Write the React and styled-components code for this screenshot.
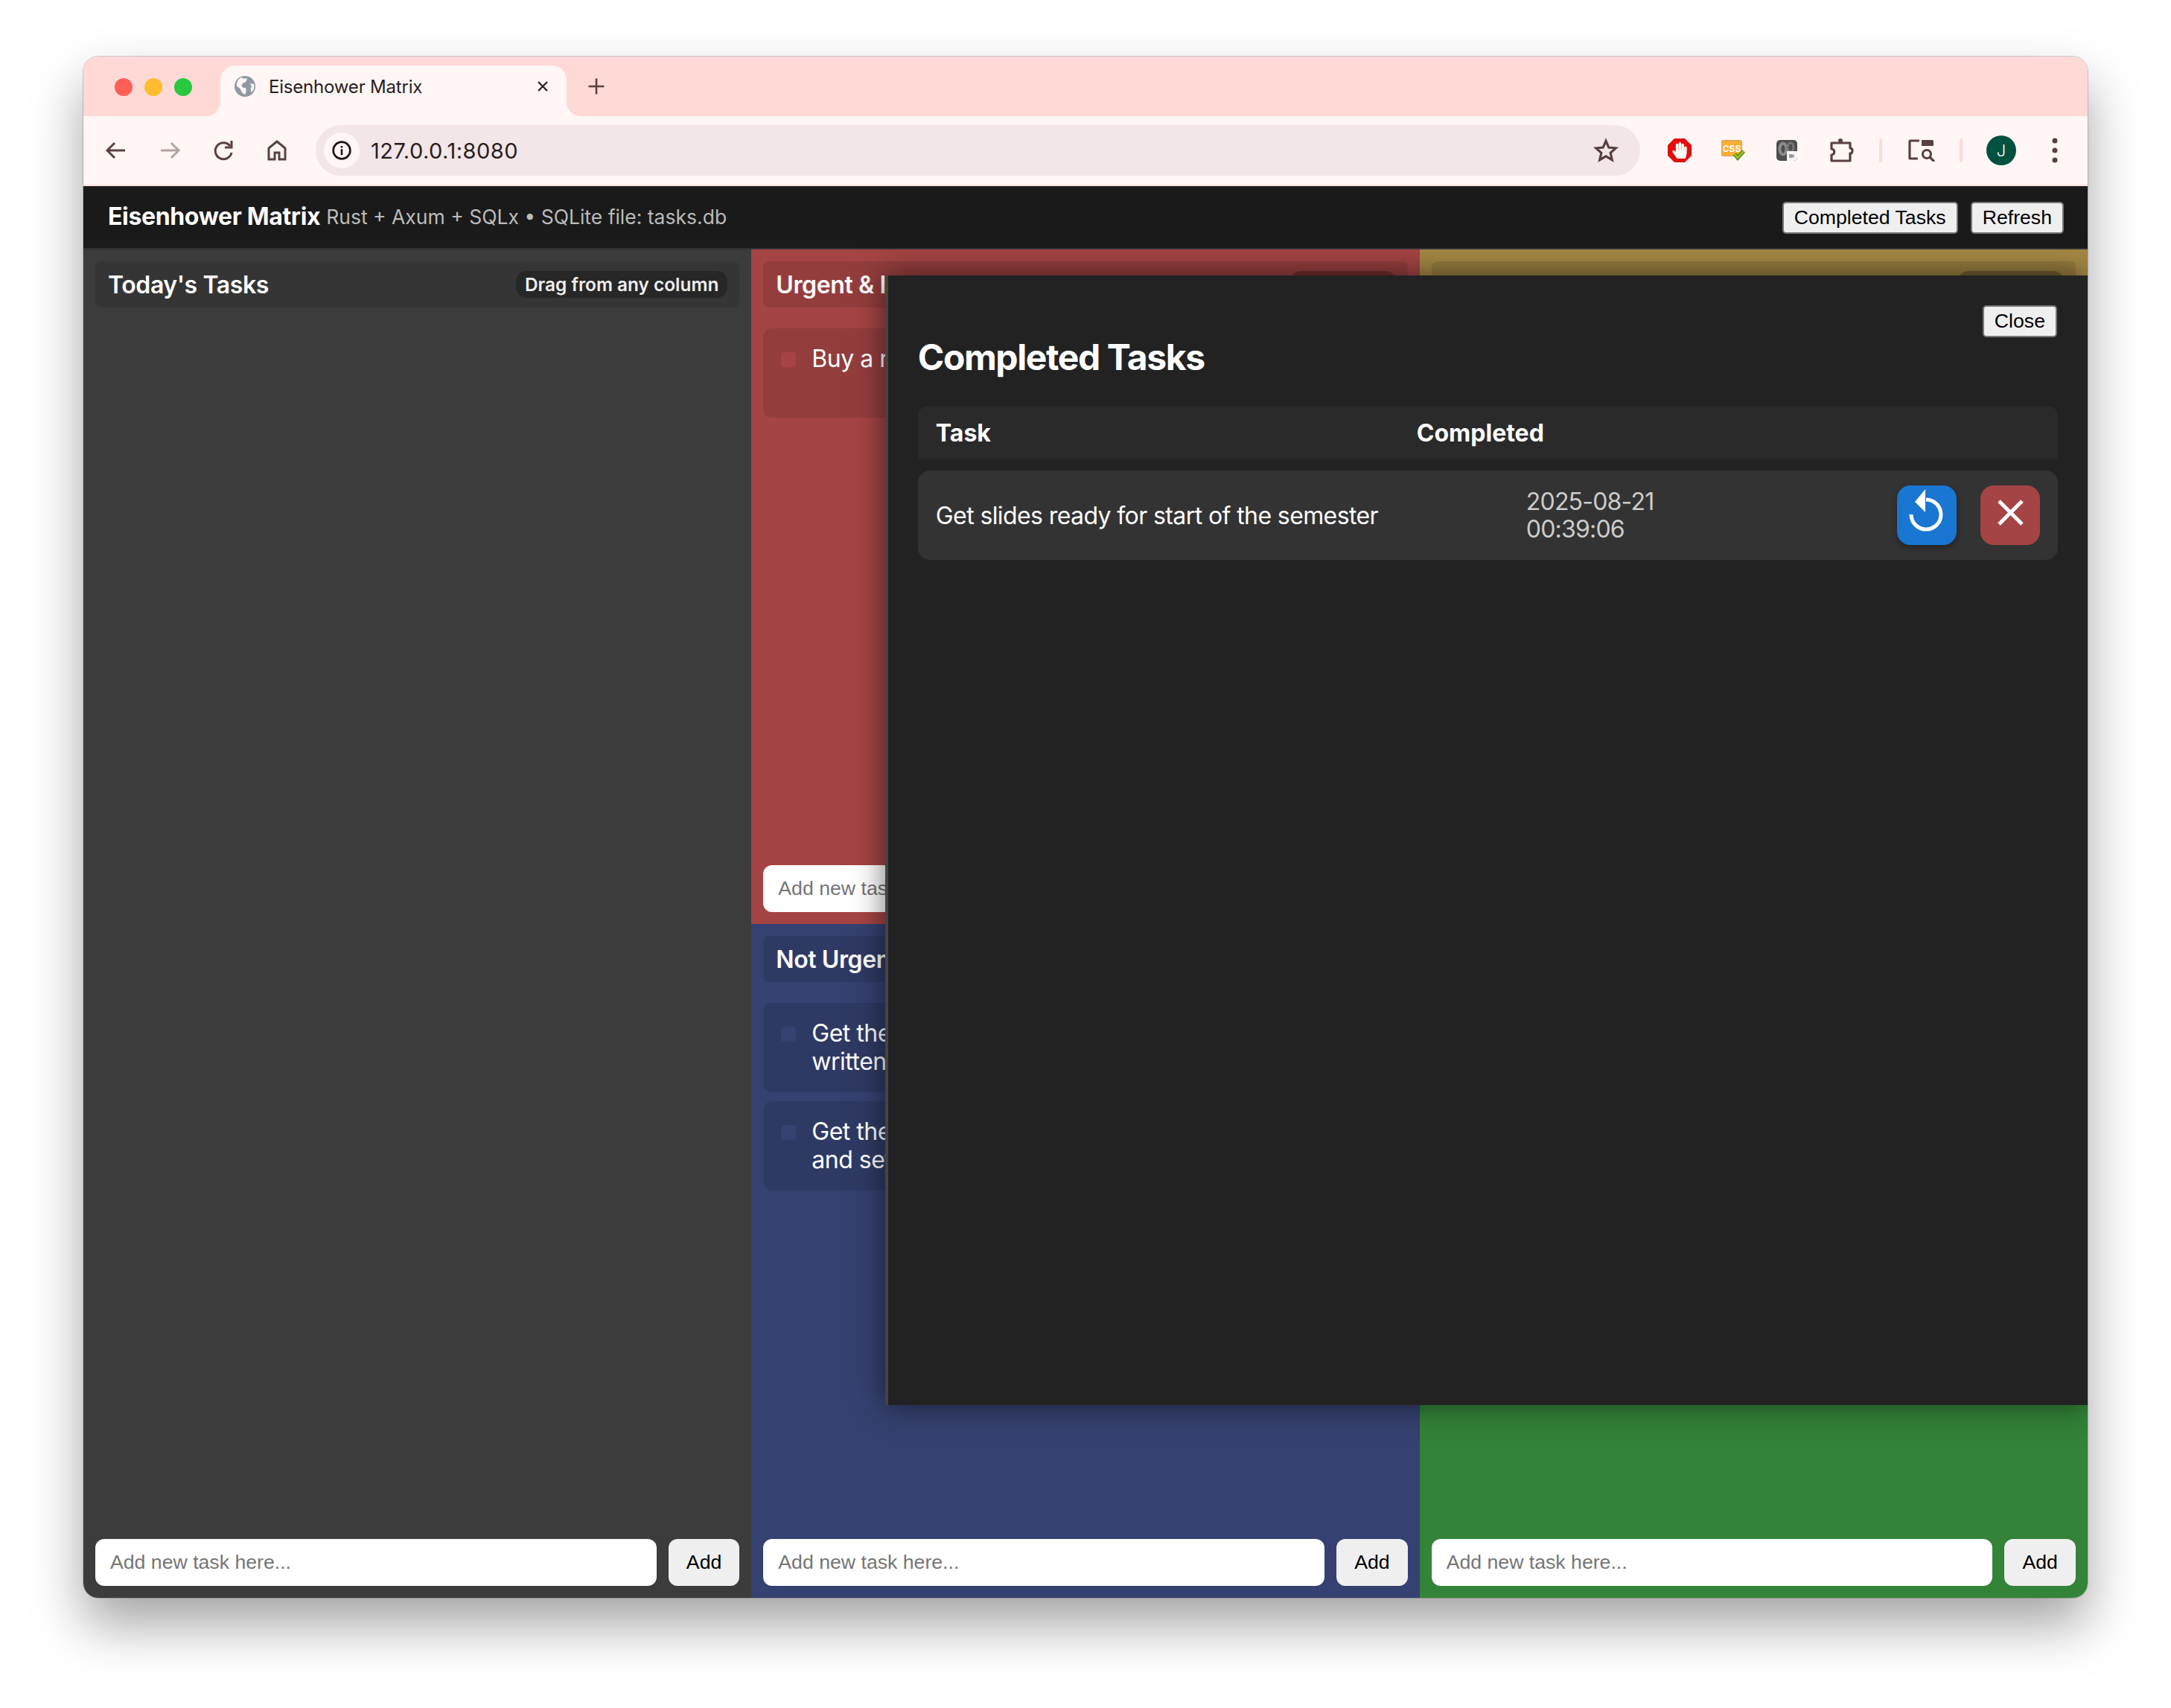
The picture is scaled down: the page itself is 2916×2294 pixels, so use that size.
import React from "react";
import styled, { createGlobalStyle } from "styled-components";
import { FaHandPaper } from "react-icons/fa";

const GlobalStyle = createGlobalStyle`
  * { box-sizing: border-box; }
  body {
    margin: 0;
    background: #fff;
    font-family: Inter, "Noto Sans", sans-serif;
  }
`;

const COLUMNS = [
  {
    title: "Today's Tasks",
    badge: "Drag from any column",
    color: "#3c3c3c",
    wide: true,
    tasks: [],
  },
  { title: "Urgent & Important", badge: "Do first", color: "#a54444", tasks: ["Buy a r"] },
  { title: "Urgent & Not Important", badge: "Schedule", color: "#a58844", tasks: [] },
  {
    title: "Not Urgent & Important",
    badge: "Delegate",
    color: "#354170",
    tasks: ["Get the\nwritten", "Get the\nand set"],
  },
  { title: "Not Urgent & Not Important", badge: "Delete", color: "#338338", tasks: [] },
];

const Page = styled.div`
  height: 2294px;
  padding: 76px 112px 148px;
`;

const Window = styled.div`
  height: 100%;
  display: flex;
  flex-direction: column;
  border-radius: 20px;
  overflow: hidden;
  box-shadow: 0 0 0 1px rgba(0, 0, 0, 0.18), 0 36px 70px rgba(0, 0, 0, 0.36);
`;

const TabStrip = styled.div`
  height: 80px;
  flex: none;
  display: flex;
  align-items: flex-end;
  background: #ffd9d6;
  padding-left: 42px;
`;

const Lights = styled.div`
  display: flex;
  gap: 16px;
  align-self: center;
  margin-top: 2px;
  margin-right: 38px;
`;

const Light = styled.span`
  width: 24px;
  height: 24px;
  border-radius: 50%;
  background: ${(p) => p.$color};
`;

const Tab = styled.div`
  position: relative;
  width: 465px;
  height: 68px;
  display: flex;
  align-items: center;
  padding: 0 20px 12px 19px;
  background: #fff6f5;
  border-radius: 20px 20px 0 0;
  color: #2b1d1d;
  font-size: 24px;

  &::before,
  &::after {
    content: "";
    position: absolute;
    bottom: 0;
    width: 20px;
    height: 20px;
  }
  &::before {
    left: -20px;
    background: radial-gradient(circle at 0 0, #ffd9d6 20px, #fff6f5 20.5px);
  }
  &::after {
    right: -20px;
    background: radial-gradient(circle at 100% 0, #ffd9d6 20px, #fff6f5 20.5px);
  }
`;

const TabTitle = styled.span`
  flex: 1;
  margin-left: 18px;
  letter-spacing: -0.2px;
`;

const NewTab = styled.div`
  width: 80px;
  height: 68px;
  display: flex;
  align-items: center;
  justify-content: center;
  padding-bottom: 12px;
`;

const Toolbar = styled.div`
  height: 94px;
  flex: none;
  display: flex;
  align-items: flex-start;
  padding: 12px 8px 0;
  background: #fff6f5;
  border-bottom: 2px solid #ffe3df;
`;

const Slot = styled.div`
  width: 72px;
  height: 68px;
  flex: none;
  display: flex;
  align-items: center;
  justify-content: center;
`;

const Omnibox = styled.div`
  flex: 1;
  height: 68px;
  margin: 0 17px 0 16px;
  display: flex;
  align-items: center;
  padding: 0 29px 0 11px;
  background: #f2e6e8;
  border-radius: 34px;
  color: #2b1d1d;
  font-size: 29px;
  letter-spacing: 0.5px;
`;

const InfoChip = styled.span`
  width: 48px;
  height: 48px;
  flex: none;
  display: flex;
  align-items: center;
  justify-content: center;
  border-radius: 50%;
  background: #fff6f5;
  margin-right: 15px;
`;

const Address = styled.span`
  flex: 1;
`;

const Divider = styled.div`
  width: 36px;
  height: 68px;
  flex: none;
  display: flex;
  align-items: center;
  justify-content: center;

  &::before {
    content: "";
    width: 4px;
    height: 32px;
    border-radius: 2px;
    background: #ffd9d6;
  }
`;

const Avatar = styled.span`
  width: 40px;
  height: 40px;
  display: flex;
  align-items: center;
  justify-content: center;
  border-radius: 50%;
  background: #00513f;
  color: #fff;
  font-size: 22px;
  font-weight: 300;
`;

const AppArea = styled.div`
  position: relative;
  flex: 1;
  min-height: 0;
  display: flex;
  flex-direction: column;
  overflow: hidden;
`;

const AppHeader = styled.header`
  height: 85px;
  flex: none;
  display: flex;
  align-items: center;
  gap: 17px;
  padding: 0 32px 2px 33px;
  background: #1a1a1a;
  border-bottom: 2px solid #333;
`;

const AppTitle = styled.h1`
  margin: 0;
  color: #fff;
  font-size: 32px;
  font-weight: 700;
  letter-spacing: -0.35px;
`;

const AppSub = styled.span`
  flex: 1;
  margin-left: -9px;
  color: #bbb;
  font-size: 26.5px;
`;

const PlainButton = styled.button`
  height: 43px;
  padding: 0 14px;
  font-family: "Liberation Sans", Arial, sans-serif;
  font-size: 26.67px;
  color: #000;
  background: #efefef;
  border: 2px solid #767676;
  border-radius: 5px;
`;

const HeaderButton = styled(PlainButton)`
  margin-top: 3px;
`;

const Matrix = styled.main`
  flex: 1;
  min-height: 0;
  display: grid;
  grid-template-columns: repeat(3, 1fr);
  grid-template-rows: 906px 1fr;
`;

const Column = styled.section`
  min-width: 0;
  min-height: 0;
  display: flex;
  flex-direction: column;
  padding: 16px;
  background: ${(p) => p.$color};
  grid-row: ${(p) => (p.$wide ? "span 2" : "auto")};
`;

const ColumnHeader = styled.div`
  height: 62px;
  flex: none;
  display: flex;
  align-items: center;
  justify-content: space-between;
  padding: 0 16px 0 17px;
  margin-bottom: 28px;
  border-radius: 8px;
  background: rgba(0, 0, 0, 0.1);
`;

const ColumnTitle = styled.h2`
  margin: 0;
  color: #fff;
  font-size: 32px;
  font-weight: 600;
  letter-spacing: -0.4px;
  white-space: nowrap;
`;

const Badge = styled.span`
  height: 36px;
  min-width: 142px;
  display: flex;
  align-items: center;
  padding: 0 12px;
  border-radius: 14px;
  background: rgba(0, 0, 0, 0.25);
  color: #eee;
  font-size: 24.4px;
  font-weight: 600;
  white-space: nowrap;
`;

const TaskList = styled.div`
  flex: 1;
  min-height: 0;
  display: flex;
  flex-direction: column;
  gap: 12px;
`;

const TaskCard = styled.div`
  height: 120px;
  flex: none;
  display: flex;
  align-items: flex-start;
  gap: 21px;
  padding: 22px 24px;
  border-radius: 12px;
  background: rgba(0, 0, 0, 0.1);
  color: #fff;
  font-size: 32px;
  line-height: 38px;
  letter-spacing: -0.5px;
  white-space: pre-line;
`;

const Check = styled.span`
  width: 20px;
  height: 20px;
  flex: none;
  margin-top: 10px;
  border-radius: 4px;
  background: ${(p) => p.$color};
`;

const AddForm = styled.form`
  height: 63px;
  flex: none;
  display: flex;
  gap: 16px;
`;

const AddInput = styled.input`
  flex: 1;
  min-width: 0;
  padding: 0 20px;
  border: none;
  border-radius: 12px;
  background: #fff;
  font-family: "Liberation Sans", Arial, sans-serif;
  font-size: 26.67px;

  &::placeholder {
    color: #757575;
  }
`;

const AddButton = styled.button`
  width: 95.5px;
  border: none;
  border-radius: 12px;
  background: #efefef;
  color: #000;
  font-family: "Liberation Sans", Arial, sans-serif;
  font-size: 26.67px;
`;

const Modal = styled.div`
  position: absolute;
  top: 120px;
  bottom: 259px;
  left: 40%;
  right: 0;
  padding: 40px;
  background: #222;
  border-left: 4px solid #444;
  box-shadow: 0 0 40px rgba(0, 0, 0, 0.55);
  color: #fff;
`;

const CloseButton = styled(PlainButton)`
  position: absolute;
  top: 40px;
  right: 41px;
`;

const ModalTitle = styled.h2`
  margin: 0;
  height: 136px;
  padding-top: 41px;
  font-size: 48px;
  line-height: 58px;
  font-weight: 700;
  letter-spacing: -1.4px;
`;

const TableHead = styled.div`
  height: 70px;
  display: grid;
  grid-template-columns: 646px 1fr;
  align-items: center;
  padding: 0 24px;
  margin-bottom: 16px;
  border-radius: 12px 12px 0 0;
  background: #2a2a2a;
  font-size: 32px;
  font-weight: 700;
`;

const TableRow = styled.div`
  height: 120px;
  display: grid;
  grid-template-columns: 793px 1fr auto;
  align-items: center;
  padding: 0 24px;
  border-radius: 16px;
  background: #333;
  font-size: 32px;
  letter-spacing: -0.6px;
`;

const DateCell = styled.div`
  color: #ccc;
  line-height: 37px;
  letter-spacing: -0.8px;
`;

const Actions = styled.div`
  display: flex;
  gap: 32px;
`;

const RoundButton = styled.button`
  width: 80px;
  height: 80px;
  padding: 0;
  display: flex;
  border: none;
  border-radius: 18px;
  background: ${(p) => p.$color};
  box-shadow: ${(p) => (p.$raised ? "0 3px 8px rgba(0, 0, 0, 0.35)" : "none")};
`;

const AdBlockWrap = styled.span`
  width: 32px;
  height: 32px;
  display: flex;
  align-items: center;
  justify-content: center;
  background: #e30d0d;
  color: #fff;
  font-size: 22px;
  clip-path: polygon(28% 0, 72% 0, 100% 28%, 100% 72%, 72% 100%, 28% 100%, 0 72%, 0 28%);
`;

const ICON = "#5a4040";

const Stroke = ({ size = 32, color = ICON, width = 3, children }) => (
  <svg width={size} height={size} viewBox="0 0 32 32" fill="none" stroke={color} strokeWidth={width}>
    {children}
  </svg>
);

const GlobeIcon = () => (
  <svg width="28" height="28" viewBox="0 0 28 28">
    <circle cx="14" cy="14" r="14" fill="#8f98a3" />
    <path
      d="M9 2c3 2 6 2 8 1-1 3-1 5-4 6-2 1-4 2-3 5 1 2 3 2 5 2 1 3 1 6-1 9-3-1-5-4-6-7-1-2-3-3-5-4C2 9 5 4 9 2ZM21 10l5 1c1 4 0 8-3 11-2-3-1-6 0-8l-2-4Z"
      fill="#fff6f5"
    />
  </svg>
);

const AdBlockIcon = () => (
  <AdBlockWrap>
    <FaHandPaper />
  </AdBlockWrap>
);

const CssIcon = () => (
  <svg width="32" height="28" viewBox="0 0 32 28">
    <rect x="0.5" y="0.5" width="27" height="21" rx="1.5" fill="#f9ae36" stroke="#d9a060" />
    <text x="14" y="15.5" textAnchor="middle" fontSize="12" fontWeight="700" fill="#fff" fontFamily="Inter, sans-serif">
      CSS
    </text>
    <path d="M18 19l4 5 8-9" fill="none" stroke="#4f7d12" strokeWidth="5" />
    <path d="M18 19l4 5 8-9" fill="none" stroke="#9ccb28" strokeWidth="2.5" />
  </svg>
);

const MeetIcon = () => (
  <svg width="28" height="28" viewBox="0 0 28 28">
    <rect width="28" height="28" rx="5" fill="#4e4e4e" />
    <ellipse cx="9" cy="12" rx="4.5" ry="7.5" fill="none" stroke="#8b8b8b" strokeWidth="4" />
    <ellipse cx="19" cy="10" rx="4" ry="6" fill="none" stroke="#777" strokeWidth="3" />
    <path d="M14 15h14v8a5 5 0 0 1-5 5h-9Z" fill="#f5f5f5" />
    <path d="M17 19h5v2l2-2v5l-2-2v2h-5Z" fill="#999" />
  </svg>
);

const PuzzleIcon = () => (
  <svg width="34" height="34" viewBox="0 0 34 34" fill="none" stroke={ICON} strokeWidth="3.2" strokeLinejoin="round" style={{ marginLeft: 4 }}>
    <path d="M3 7H28V14C32 13 32 22 28 21V31H3V23C8 23 8 15 3 15Z" />
    <circle cx="15" cy="4" r="3" fill={ICON} stroke="none" />
  </svg>
);

const MediaIcon = () => (
  <svg width="36" height="30" viewBox="0 0 36 30" fill="none" stroke={ICON} strokeWidth="3.2" style={{ marginLeft: 2 }}>
    <path d="M15 2H3a1 1 0 0 0-1 1V25a1 1 0 0 0 1 1H13" />
    <path d="M18 1h14a2 2 0 0 1 2 2v6H18Z" fill={ICON} stroke="none" />
    <circle cx="25" cy="20" r="5.5" />
    <path d="M29 24l6 6" />
  </svg>
);

const UndoIcon = () => (
  <svg width="80" height="80" viewBox="0 0 80 80">
    <path d="M39 19A20 20 0 1 1 19 39" fill="none" stroke="#fff" strokeWidth="5" />
    <path d="M38 5L24 22L38 36Z" fill="#fff" />
  </svg>
);

const CrossIcon = () => (
  <svg width="80" height="80" viewBox="0 0 80 80">
    <path d="M25 21L56 52M56 21L25 52" fill="none" stroke="#fff" strokeWidth="5" />
  </svg>
);

const BrowserChrome = () => (
  <>
    <TabStrip>
      <Lights>
        <Light $color="#ff5f57" />
        <Light $color="#febc2e" />
        <Light $color="#28c840" />
      </Lights>
      <Tab>
        <GlobeIcon />
        <TabTitle>Eisenhower Matrix</TabTitle>
        <Stroke size={24} color="#2b1d1d">
          <path d="M8 8l16 16M24 8L8 24" />
        </Stroke>
      </Tab>
      <NewTab>
        <Stroke size={28} color={ICON}>
          <path d="M16 4v24M4 16h24" />
        </Stroke>
      </NewTab>
    </TabStrip>
    <Toolbar>
      <Slot>
        <Stroke>
          <path d="M28 16H5M14 6L4 16l10 10" />
        </Stroke>
      </Slot>
      <Slot>
        <Stroke color="#b3a3a3">
          <path d="M4 16h23M18 6l10 10-10 10" />
        </Stroke>
      </Slot>
      <Slot>
        <Stroke>
          <path d="M25 10a11 11 0 1 0 2 9" />
          <path d="M27 3v9h-9" />
        </Stroke>
      </Slot>
      <Slot>
        <Stroke>
          <path d="M16 4L5 13v15h8v-9h6v9h8V13Z" />
        </Stroke>
      </Slot>
      <Omnibox>
        <InfoChip>
          <Stroke size={28} color="#1f1414">
            <circle cx="16" cy="16" r="13" />
            <path d="M16 14v9M16 9v3" />
          </Stroke>
        </InfoChip>
        <Address>127.0.0.1:8080</Address>
        <Stroke size={34}>
          <path d="M16 4l3.6 8.3 9 .8-6.8 6 2 8.8-7.8-4.6-7.8 4.6 2-8.8-6.8-6 9-.8Z" />
        </Stroke>
      </Omnibox>
      <Slot>
        <AdBlockIcon />
      </Slot>
      <Slot>
        <CssIcon />
      </Slot>
      <Slot>
        <MeetIcon />
      </Slot>
      <Slot>
        <PuzzleIcon />
      </Slot>
      <Divider />
      <Slot>
        <MediaIcon />
      </Slot>
      <Divider />
      <Slot>
        <Avatar>J</Avatar>
      </Slot>
      <Slot>
        <svg width="10" height="36" viewBox="0 0 10 36" fill={ICON}>
          <circle cx="5" cy="5" r="3.5" />
          <circle cx="5" cy="18" r="3.5" />
          <circle cx="5" cy="31" r="3.5" />
        </svg>
      </Slot>
    </Toolbar>
  </>
);

const App = () => {
  return (
    <Page>
      <GlobalStyle />
      <Window>
        <BrowserChrome />
        <AppArea>
          <AppHeader>
            <AppTitle>Eisenhower Matrix</AppTitle>
            <AppSub>Rust + Axum + SQLx • SQLite file: tasks.db</AppSub>
            <HeaderButton type="button">Completed Tasks</HeaderButton>
            <HeaderButton type="button">Refresh</HeaderButton>
          </AppHeader>
          <Matrix>
            {COLUMNS.map((col) => (
              <Column key={col.title} $color={col.color} $wide={col.wide}>
                <ColumnHeader>
                  <ColumnTitle>{col.title}</ColumnTitle>
                  <Badge>{col.badge}</Badge>
                </ColumnHeader>
                <TaskList>
                  {col.tasks.map((task) => (
                    <TaskCard key={task}>
                      <Check $color={col.color} />
                      {task}
                    </TaskCard>
                  ))}
                </TaskList>
                <AddForm onSubmit={(e) => e.preventDefault()}>
                  <AddInput placeholder="Add new task here..." />
                  <AddButton type="submit">Add</AddButton>
                </AddForm>
              </Column>
            ))}
          </Matrix>
          <Modal>
            <CloseButton type="button">Close</CloseButton>
            <ModalTitle>Completed Tasks</ModalTitle>
            <TableHead>
              <span>Task</span>
              <span>Completed</span>
            </TableHead>
            <TableRow>
              <span>Get slides ready for start of the semester</span>
              <DateCell>
                2025-08-21
                <br />
                00:39:06
              </DateCell>
              <Actions>
                <RoundButton type="button" $color="#1976d2" $raised>
                  <UndoIcon />
                </RoundButton>
                <RoundButton type="button" $color="#a54444">
                  <CrossIcon />
                </RoundButton>
              </Actions>
            </TableRow>
          </Modal>
        </AppArea>
      </Window>
    </Page>
  );
};

export default App;
